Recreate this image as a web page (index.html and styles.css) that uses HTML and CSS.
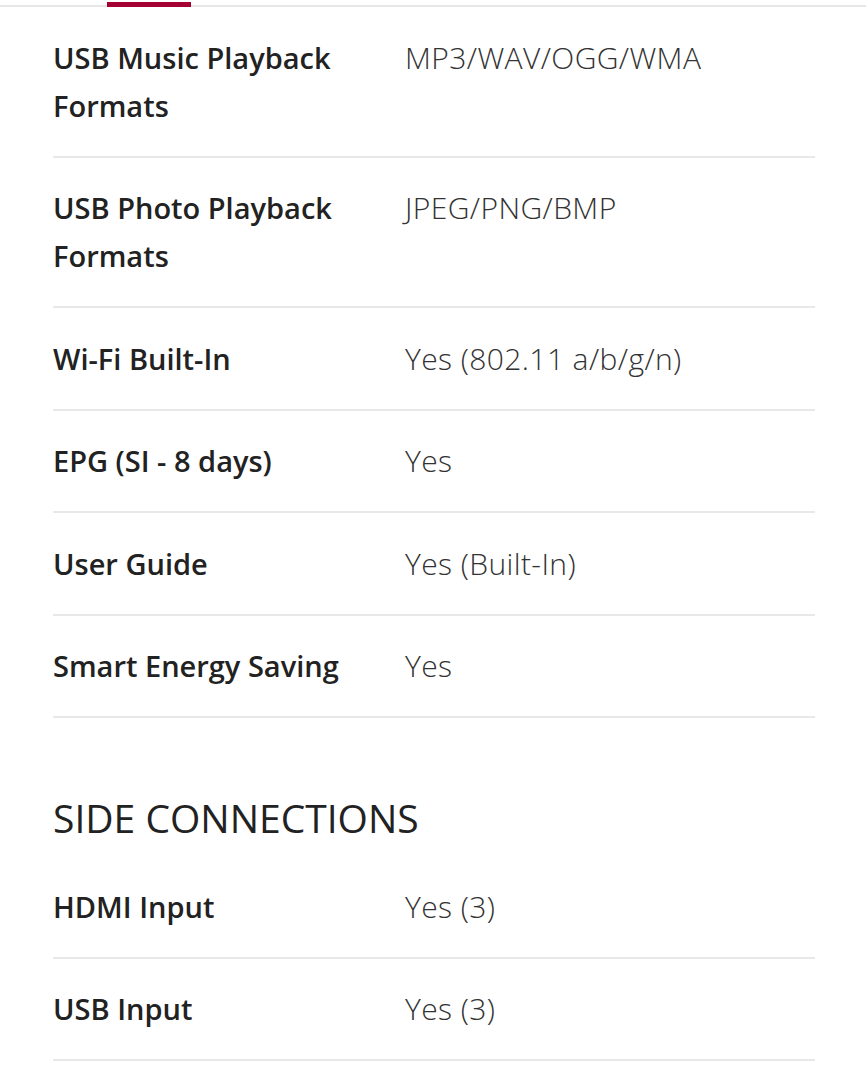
FILE: index.html
```html
<!DOCTYPE html>
<html>
<head>
<meta charset="utf-8">
<link rel="stylesheet" href="styles.css">
</head>
<body>
<div class="tabs"><div class="tab-active"></div></div>
<div class="specs">
  <div class="row"><div class="label">USB Music Playback Formats</div><div class="value">MP3/WAV/OGG/WMA</div></div>
  <div class="row"><div class="label">USB Photo Playback Formats</div><div class="value">JPEG/PNG/BMP</div></div>
  <div class="row"><div class="label">Wi-Fi Built-In</div><div class="value">Yes (802.11 a/b/g/n)</div></div>
  <div class="row"><div class="label">EPG (SI - 8 days)</div><div class="value">Yes</div></div>
  <div class="row"><div class="label">User Guide</div><div class="value">Yes (Built-In)</div></div>
  <div class="row"><div class="label">Smart Energy Saving</div><div class="value">Yes</div></div>
  <h2 class="section">SIDE CONNECTIONS</h2>
  <div class="row"><div class="label">HDMI Input</div><div class="value">Yes (3)</div></div>
  <div class="row"><div class="label">USB Input</div><div class="value">Yes (3)</div></div>
</div>
</body>
</html>
```
FILE: styles.css
```css
html, body { margin: 0; padding: 0; background: #fff; }
body { font-family: "Open Sans", "Noto Sans", sans-serif; color: #222; }
.tabs { display: flex; height: 5px; border-bottom: 2px solid #e6e6e6; }
.tab-active { margin-left: 107px; width: 84px; height: 5px; background: #a50034; margin-top: 2px; }
.specs { margin: 0 51px 0 53px; }
.row { display: grid; grid-template-columns: 352px 1fr; padding: 26.5px 0 26px; border-bottom: 2px solid #e8e8e8; }
.label { font-size: 29px; font-weight: 600; line-height: 48px; color: #222; padding-right: 30px; }
.value { font-size: 30px; font-weight: 300; line-height: 48px; color: #333; letter-spacing: 0.4px; }
.section { margin: 76px 0 14px; font-size: 39px; font-weight: 400; line-height: 48px; color: #222; }
```
